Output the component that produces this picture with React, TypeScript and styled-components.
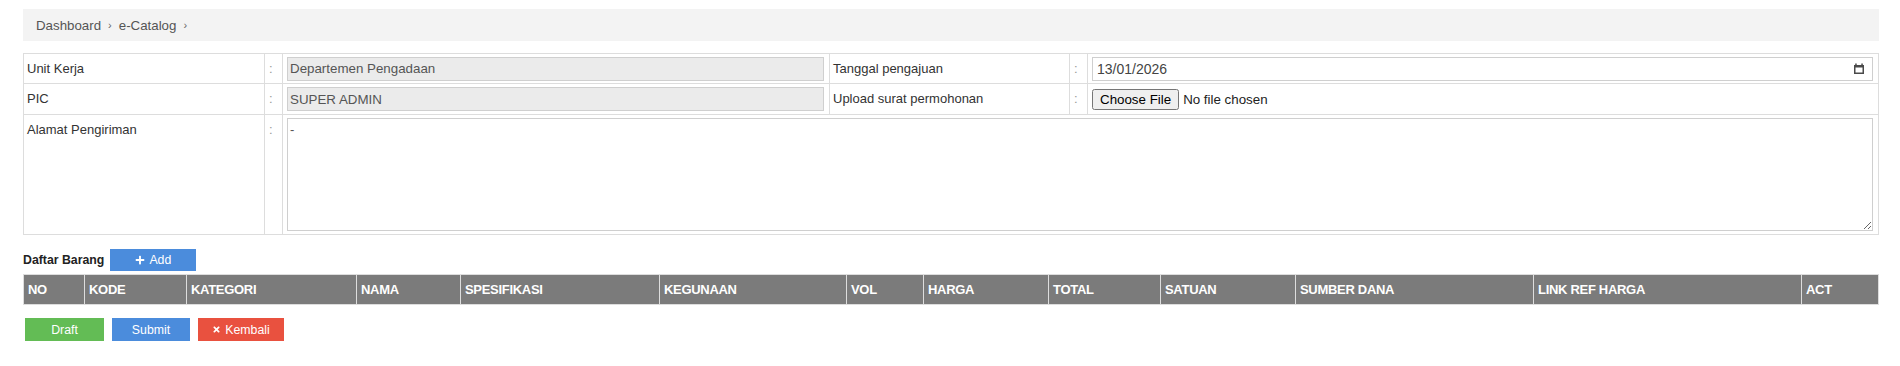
import styled, { createGlobalStyle } from "styled-components";
import { FaPlus, FaTimes } from "react-icons/fa";

const COLORS = {
  line: "#dddddd",
  text: "#333333",
  muted: "#555555",
  head: "#7b7b7b",
  blue: "#4b8cdc",
  green: "#63bc55",
  red: "#e9513f",
};

const GlobalStyle = createGlobalStyle`
  body {
    margin: 0;
    background: #fff;
    font-family: "Liberation Sans", Arial, sans-serif;
    color: ${COLORS.text};
  }
`;

const columns = [
  { title: "NO", width: "60px" },
  { title: "KODE", width: "101px" },
  { title: "KATEGORI", width: "169px" },
  { title: "NAMA", width: "103px" },
  { title: "SPESIFIKASI", width: "198px" },
  { title: "KEGUNAAN", width: "186px" },
  { title: "VOL", width: "76px" },
  { title: "HARGA", width: "124px" },
  { title: "TOTAL", width: "111px" },
  { title: "SATUAN", width: "134px" },
  { title: "SUMBER DANA", width: "237px" },
  { title: "LINK REF HARGA", width: "267px" },
  { title: "ACT", width: "1fr" },
];

const CalendarIcon = () => (
  <svg width="10" height="11" viewBox="0 0 10 11">
    <rect x="0.75" y="2.75" width="8.5" height="7.5" fill="none" stroke="#4a4a4a" strokeWidth="1.5" />
    <rect x="0" y="2" width="10" height="2.5" fill="#4a4a4a" />
    <rect x="1.2" y="0.5" width="1.5" height="2" fill="#4a4a4a" />
    <rect x="7.3" y="0.5" width="1.5" height="2" fill="#4a4a4a" />
  </svg>
);

const App = () => {
  return (
    <Page>
      <GlobalStyle />
      <Breadcrumb>
        <Crumb>Dashboard</Crumb>
        <Sep>›</Sep>
        <Crumb>e-Catalog</Crumb>
        <Sep>›</Sep>
      </Breadcrumb>

      <FormGrid>
        <Label>Unit Kerja</Label>
        <Colon>:</Colon>
        <Value>
          <ReadOnlyInput readOnly value="Departemen Pengadaan" />
        </Value>
        <Label>Tanggal pengajuan</Label>
        <Colon>:</Colon>
        <Value>
          <DateBox>
            <span>13/01/2026</span>
            <CalendarIcon />
          </DateBox>
        </Value>

        <Label>PIC</Label>
        <Colon>:</Colon>
        <Value>
          <ReadOnlyInput readOnly value="SUPER ADMIN" />
        </Value>
        <Label>Upload surat permohonan</Label>
        <Colon>:</Colon>
        <Value>
          <FileInput type="file" />
        </Value>

        <Label>Alamat Pengiriman</Label>
        <Colon>:</Colon>
        <Value $wide>
          <Address defaultValue="-" />
        </Value>
      </FormGrid>

      <SectionHead>
        <SectionTitle>Daftar Barang</SectionTitle>
        <Button $color={COLORS.blue} $width={86} $height={22}>
          <FaPlus size={10} /> Add
        </Button>
      </SectionHead>

      <ItemHead $template={columns.map((c) => c.width).join(" ")}>
        {columns.map((c) => (
          <HeadCell key={c.title}>{c.title}</HeadCell>
        ))}
      </ItemHead>

      <Actions>
        <Button $color={COLORS.green} $width={79}>
          Draft
        </Button>
        <Button $color={COLORS.blue} $width={78}>
          Submit
        </Button>
        <Button $color={COLORS.red} $width={86}>
          <FaTimes size={9} /> Kembali
        </Button>
      </Actions>
    </Page>
  );
};

const Page = styled.div`
  padding: 9px 21px 0 23px;
`;

const Breadcrumb = styled.div`
  height: 32px;
  display: flex;
  align-items: center;
  padding-left: 13px;
  background: #f3f3f3;
  font-size: 13.3px;
  color: ${COLORS.muted};
`;
const Crumb = styled.span``;
const Sep = styled.span`
  margin: 0 7px;
  font-size: 11px;
  color: #666;
`;

const FormGrid = styled.div`
  margin-top: 12px;
  display: grid;
  grid-template-columns: 240px 17px 546px 239px 17px 1fr;
  grid-template-rows: 29px 30px 119px;
  gap: 1px;
  background: ${COLORS.line};
  border: 1px solid ${COLORS.line};
`;
const Label = styled.div`
  background: #fff;
  padding: 7px 4px 0 3px;
  font-size: 13px;
  line-height: 15px;
  color: ${COLORS.text};
`;
const Colon = styled(Label)`
  padding-left: 4px;
  color: #999;
`;
const Value = styled.div<{ $wide?: boolean }>`
  background: #fff;
  display: flex;
  align-items: ${(p) => (p.$wide ? "stretch" : "center")};
  padding: ${(p) => (p.$wide ? "3px 5px 3px 4px" : "0 5px 0 4px")};
  grid-column: ${(p) => (p.$wide ? "3 / 7" : "auto")};
`;
const ReadOnlyInput = styled.input`
  box-sizing: border-box;
  width: 100%;
  height: 24px;
  padding: 1px 2px;
  border: 1px solid #cfcfcf;
  background: #ebebeb;
  font-family: "Liberation Sans", Arial, sans-serif;
  font-size: 13.33px;
  color: ${COLORS.muted};
  outline: none;
`;
const DateBox = styled.div`
  box-sizing: border-box;
  width: 100%;
  height: 24px;
  display: flex;
  align-items: center;
  justify-content: space-between;
  padding: 0 8px 0 4px;
  border: 1px solid #cfcfcf;
  background: #fff;
  font-size: 14px;
  color: #444;
`;
const FileInput = styled.input`
  font-family: "Liberation Sans", Arial, sans-serif;
  font-size: 13.33px;
  color: #222;
`;
const Address = styled.textarea`
  box-sizing: border-box;
  width: 100%;
  height: 100%;
  padding: 3px 2px;
  border: 1px solid #cfcfcf;
  font-family: "Liberation Sans", Arial, sans-serif;
  font-size: 13px;
  color: ${COLORS.muted};
  outline: none;
`;

const SectionHead = styled.div`
  margin-top: 14px;
  display: flex;
  align-items: center;
  gap: 6px;
`;
const SectionTitle = styled.span`
  font-size: 12.3px;
  font-weight: bold;
  color: #222;
`;

const Button = styled.button<{ $color: string; $width: number; $height?: number }>`
  width: ${(p) => p.$width}px;
  height: ${(p) => p.$height ?? 23}px;
  display: inline-flex;
  align-items: center;
  justify-content: center;
  gap: 4px;
  padding: 0;
  border: none;
  background: ${(p) => p.$color};
  color: #fff;
  font-family: "Liberation Sans", Arial, sans-serif;
  font-size: 12.3px;
  cursor: pointer;
`;

const ItemHead = styled.div<{ $template: string }>`
  margin-top: 3px;
  display: grid;
  grid-template-columns: ${(p) => p.$template};
  gap: 1px;
  background: ${COLORS.line};
  border: 1px solid ${COLORS.line};
`;
const HeadCell = styled.div`
  height: 29px;
  display: flex;
  align-items: center;
  padding-left: 4px;
  background: ${COLORS.head};
  color: #fff;
  font-size: 13px;
  font-weight: bold;
  letter-spacing: -0.3px;
`;

const Actions = styled.div`
  margin-top: 13px;
  padding-left: 2px;
  display: flex;
  gap: 8px;
`;

export default App;
